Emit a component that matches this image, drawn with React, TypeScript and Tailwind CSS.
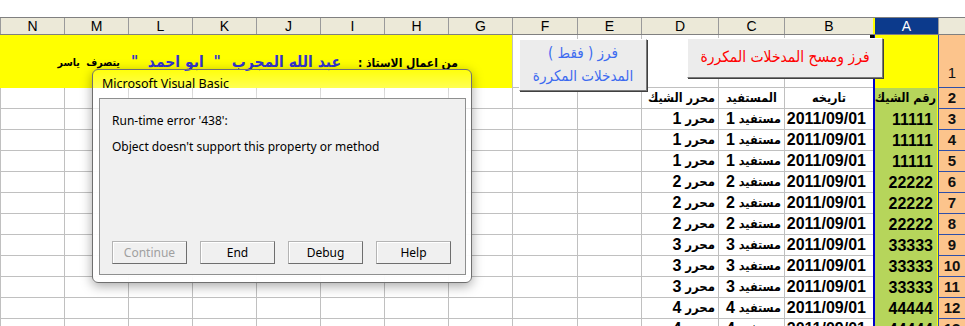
const SHEET_FONT = "font-['Liberation_Sans','DejaVu_Sans',sans-serif]"
const DIALOG_FONT = "font-['Noto_Sans','Open_Sans',sans-serif]"

const LETTERS = ['G', 'H', 'I', 'J', 'K', 'L', 'M', 'N']

type Row = { n: number; a: string; num: number }

const ROWS: Row[] = [
  { n: 3, a: '11111', num: 1 },
  { n: 4, a: '11111', num: 1 },
  { n: 5, a: '11111', num: 1 },
  { n: 6, a: '22222', num: 2 },
  { n: 7, a: '22222', num: 2 },
  { n: 8, a: '22222', num: 2 },
  { n: 9, a: '33333', num: 3 },
  { n: 10, a: '33333', num: 3 },
  { n: 11, a: '33333', num: 3 },
  { n: 12, a: '44444', num: 4 },
  { n: 13, a: '44444', num: 4 },
]

// arabic glyphs only exist in DejaVu here, which runs much wider than Arial's arabic
function Ar({ className = '', children }: { className?: string; children: React.ReactNode }) {
  return <span className={`font-['DejaVu_Sans',sans-serif] font-stretch-condensed whitespace-nowrap ${className}`}>{children}</span>
}

function Cell({ w, className = '', children }: { w: string; className?: string; children?: React.ReactNode }) {
  return (
    <div className={`${w} shrink-0 h-full border-l border-b border-[#c0c0c0] flex items-center overflow-hidden whitespace-nowrap ${className}`}>
      {children}
    </div>
  )
}

function RowHead({ children, className = '' }: { children: React.ReactNode; className?: string }) {
  return (
    <div className={`w-[27px] shrink-0 h-full bg-[#fcc48c] border-l border-b border-[#2f4fa8] flex justify-center text-[15px] text-[#111] ${className}`}>
      {children}
    </div>
  )
}

function EmptyCols() {
  return (
    <>
      <Cell w="w-[64px]" />
      <Cell w="w-[65px]" />
      {LETTERS.map((l) => (
        <Cell key={l} w="w-[64px]" />
      ))}
    </>
  )
}

function DataRow({ row }: { row: Row }) {
  return (
    <div className="flex h-[21px] font-bold text-[16px] text-black">
      <RowHead className="items-center">{row.n}</RowHead>
      <div className="w-[65px] shrink-0 h-full bg-[#b6d55b] border-l-2 border-l-[#0000c8] border-r border-r-[#ffff00] flex items-center pr-[4px]">
        {row.a}
      </div>
      <Cell w="w-[89px]" className="pr-[7px]">2011/09/01</Cell>
      <Cell w="w-[66px]" className="pr-[3px] gap-[4px]">
        <Ar className="text-[12.5px]">مستفيد</Ar>
        <span>{row.num}</span>
      </Cell>
      <Cell w="w-[77px]" className="pr-[3px] gap-[4px]">
        <Ar className="text-[13px]">محرر</Ar>
        <span>{row.num}</span>
      </Cell>
      <EmptyCols />
    </div>
  )
}

function HeaderCell({ w, children }: { w: string; children?: React.ReactNode }) {
  return (
    <div className={`${w} shrink-0 h-full border-l border-[#9a9a9a] flex items-center justify-center`}>
      {children}
    </div>
  )
}

function DialogButton({ label, disabled }: { label: string; disabled?: boolean }) {
  return (
    <div
      className={`w-[75px] h-[23px] bg-[#f0f0f0] border border-[#b4b4b4] border-r-[#6e6e6e] border-b-[#6e6e6e] shadow-[inset_1px_1px_0_#ffffff] flex items-center justify-center text-[12px] ${
        disabled ? 'text-[#a0a0a0]' : 'text-black'
      }`}
    >
      {label}
    </div>
  )
}

export default function App() {
  return (
    <div dir="rtl" className={`relative w-[965px] h-[326px] overflow-hidden bg-white pt-[17px] ${SHEET_FONT}`}>
      {/* column headers */}
      <div className="flex h-[18px] bg-[#ece9d8] border-t border-b border-[#808080] text-[14px] text-black">
        <HeaderCell w="w-[27px]" />
        <div className="w-[65px] shrink-0 h-full bg-[#0c3a8c] text-white flex items-center justify-center border-l-2 border-l-[#ffff00]">A</div>
        <HeaderCell w="w-[89px]">B</HeaderCell>
        <HeaderCell w="w-[66px]">C</HeaderCell>
        <HeaderCell w="w-[77px]">D</HeaderCell>
        <HeaderCell w="w-[64px]">E</HeaderCell>
        <HeaderCell w="w-[65px]">F</HeaderCell>
        {LETTERS.map((l) => (
          <HeaderCell key={l} w="w-[64px]">{l}</HeaderCell>
        ))}
      </div>

      {/* row 1 */}
      <div className="flex h-[53px]">
        <RowHead className="items-end pb-[3px]">1</RowHead>
        <div className="w-[65px] shrink-0 h-full bg-[#ffff00] border-l-2 border-l-[#0000c8] border-r border-r-[#ffff00]" />
        <Cell w="w-[89px]" />
        <Cell w="w-[66px]" />
        <Cell w="w-[77px]" />
        <Cell w="w-[64px]" />
        <Cell w="w-[65px]" />
        <div className="w-[512px] shrink-0 h-full bg-[#ffff00] flex items-center pr-[54px] pt-[2px] font-bold whitespace-nowrap">
          <Ar className="text-[12px] text-black">من اعمال الاستاذ :</Ar>
          <Ar className="mr-[17px] text-[15.5px] text-[#3333cc]">عبد الله المجرب</Ar>
          <Ar className="mr-[11px] text-[15.5px] text-[#3333cc]">"&nbsp;&nbsp;ابو احمد&nbsp;&nbsp;"</Ar>
          <Ar className="mr-[11px] text-[10.5px] text-black">يتصرف&nbsp;&nbsp;ياسر</Ar>
        </div>
      </div>

      {/* row 2 */}
      <div className="flex h-[21px] font-bold text-black">
        <RowHead className="items-center">2</RowHead>
        <div className="w-[65px] shrink-0 h-full bg-[#b6d55b] border-l-2 border-l-[#0000c8] border-r border-r-[#ffff00] flex items-center pr-[1px] overflow-hidden">
          <Ar className="text-[12.5px]">رقم الشيك</Ar>
        </div>
        <Cell w="w-[89px]" className="justify-center">
          <Ar className="text-[12.5px]">تاريخه</Ar>
        </Cell>
        <Cell w="w-[66px]" className="justify-center">
          <Ar className="text-[12.5px]">المستفيد</Ar>
        </Cell>
        <Cell w="w-[77px]" className="pr-[3px]">
          <Ar className="text-[12.5px]">محرر الشيك</Ar>
        </Cell>
        <EmptyCols />
      </div>

      {ROWS.map((row) => (
        <DataRow key={row.n} row={row} />
      ))}

      {/* selection handle */}
      <div className="absolute left-[870px] top-[35px] w-[4px] h-[3px] bg-black" />

      {/* sheet buttons */}
      <div className="absolute left-[687px] top-[38px] w-[196px] h-[40px] bg-[#ececec] border border-t-white border-l-white border-r-[#7a7a7a] border-b-[#7a7a7a] shadow-[1px_1px_0_#404040] flex items-center justify-center whitespace-nowrap text-[#ff0000]">
        <Ar className="text-[15.5px]">فرز ومسح المدخلات المكررة</Ar>
      </div>
      <div className="absolute left-[519px] top-[39px] w-[128px] h-[52px] bg-[#ececec] border border-t-white border-l-white border-r-[#7a7a7a] border-b-[#7a7a7a] shadow-[1px_1px_0_#404040] flex flex-col items-center justify-center whitespace-nowrap leading-[23px] text-[#3d6bf0]">
        <Ar className="text-[15px]">فرز&nbsp;(&nbsp;فقط&nbsp;)</Ar>
        <Ar className="text-[15px]">المدخلات المكررة</Ar>
      </div>

      {/* VBA error dialog */}
      <div
        dir="ltr"
        className={`absolute left-[92px] top-[69px] w-[380px] h-[214px] rounded-[6px] border border-[#6f6f6f] bg-gradient-to-b from-white/5 via-white/50 via-[14%] to-white/95 to-[25%] shadow-[0_3px_12px_rgba(0,0,0,0.35)] flex flex-col pl-[6px] pr-[5px] pb-[7px] ${DIALOG_FONT}`}
      >
        <div className="h-[28px] shrink-0 flex items-center pl-[3px] text-[12.5px] text-black">Microsoft Visual Basic</div>
        <div className="flex-1 bg-[#f0f0f0] border border-[#8e8f8f] flex flex-col pl-[12px] pr-[14px] pt-[14px] pb-[10px] text-[12px] text-black">
          <p className="leading-[16px]">Run-time error '438':</p>
          <p className="mt-[10px] leading-[16px]">Object doesn't support this property or method</p>
          <div className="mt-auto flex gap-[13px]">
            <DialogButton label="Continue" disabled />
            <DialogButton label="End" />
            <DialogButton label="Debug" />
            <DialogButton label="Help" />
          </div>
        </div>
      </div>
    </div>
  )
}
